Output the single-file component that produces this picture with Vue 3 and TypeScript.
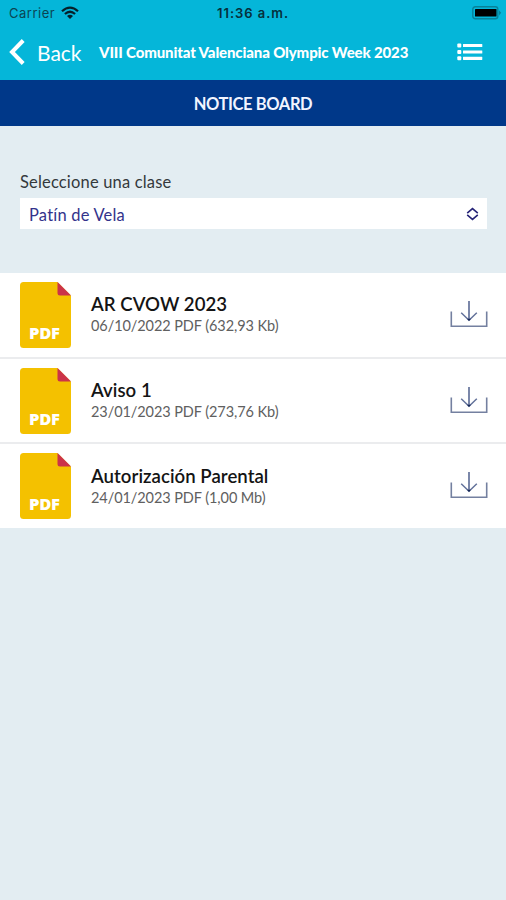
<script setup lang="ts">
interface NoticeDocument {
  title: string
  details: string
}

const documents: NoticeDocument[] = [
  { title: 'AR CVOW 2023', details: '06/10/2022 PDF (632,93 Kb)' },
  { title: 'Aviso 1', details: '23/01/2023 PDF (273,76 Kb)' },
  { title: 'Autorización Parental', details: '24/01/2023 PDF (1,00 Mb)' },
]
</script>

<template>
  <div class="screen">
    <header class="top">
      <div class="status">
        <div class="carrier">
          <span class="carrier-name">Carrier</span>
          <svg class="wifi" width="18" height="14" viewBox="0 0 18 14">
            <path d="M1 5.2Q9-2 17 5.2M3.9 8Q9 3.5 14.1 8" fill="none" stroke="#06202a" stroke-width="2.2" />
            <path d="M6 10Q9 7.6 12 10L9 13Z" fill="#06202a" />
          </svg>
        </div>
        <span class="clock">11:36 a.m.</span>
        <svg class="battery" width="30" height="14" viewBox="0 0 30 14">
          <rect x="0.8" y="0.8" width="25" height="12" rx="2.5" fill="none" stroke="#078299" stroke-width="1.4" />
          <rect x="3" y="3" width="21.5" height="7.6" rx="0.6" fill="#000" />
          <path d="M27 4.2L29.2 6.8 27 9.4Z" fill="#078299" />
        </svg>
      </div>
      <nav class="nav">
        <button class="back">
          <svg width="17" height="26" viewBox="0 0 17 26">
            <path d="M14.2 1.5L3 13 14.2 24.5" fill="none" stroke="#fff" stroke-width="4" />
          </svg>
          <span>Back</span>
        </button>
        <h1 class="event">VIII Comunitat Valenciana Olympic Week 2023</h1>
        <svg class="menu" width="26" height="18" viewBox="0 0 26 18">
          <g fill="#fff">
            <rect x="0.3" y="0.5" width="4" height="4" rx="1" />
            <rect x="0.3" y="7" width="4" height="4" rx="1" />
            <rect x="0.3" y="13.3" width="4" height="4" rx="1" />
            <rect x="6" y="0.9" width="19.3" height="3.2" rx="0.4" />
            <rect x="6" y="7.4" width="19.3" height="3.2" rx="0.4" />
            <rect x="6" y="13.7" width="19.3" height="3.2" rx="0.4" />
          </g>
        </svg>
      </nav>
    </header>

    <h2 class="board">NOTICE BOARD</h2>

    <section class="filter">
      <span class="label">Seleccione una clase</span>
      <button class="select">
        <span class="value">Patín de Vela</span>
        <svg width="13" height="14" viewBox="0 0 13 14">
          <path d="M1.2 6.1L6.5 1.6 11.8 6.1M1.2 7.9L6.5 12.4 11.8 7.9" fill="none" stroke="#252377" stroke-width="1.6" />
        </svg>
      </button>
    </section>

    <ul class="list">
      <li v-for="doc in documents" :key="doc.title" class="row">
        <div class="file">
          <svg width="51" height="66" viewBox="0 0 51 66">
            <path d="M3.5 0H37.5L51 13.5V62.5Q51 66 47.5 66H3.5Q0 66 0 62.5V3.5Q0 0 3.5 0Z" fill="#f4c100" />
            <path d="M37.5 0L51 13.5H40Q37.5 13.5 37.5 11Z" fill="#cb3349" />
            <text x="9" y="57.4" class="file-type">PDF</text>
          </svg>
        </div>
        <div class="info">
          <span class="title">{{ doc.title }}</span>
          <span class="details">{{ doc.details }}</span>
        </div>
        <svg class="download" width="38" height="28" viewBox="0 0 38 28">
          <path d="M1.3 11.5V26.3H36.7V11.5" fill="none" stroke="#7480a0" stroke-width="1.6" />
          <path d="M19 1V20" fill="none" stroke="#64739b" stroke-width="1.7" />
          <path d="M11.2 12.7L19 20.3 26.8 12.7" fill="none" stroke="#64739b" stroke-width="1.5" />
          <path d="M17 18.8H21L19 21Z" fill="#142655" />
        </svg>
      </li>
    </ul>
  </div>
</template>

<style>
body {
  margin: 0;
  background: #e3edf2;
}
</style>

<style scoped>
.screen {
  width: 506px;
  height: 900px;
  overflow: hidden;
  background: #e3edf2;
  font-family: Lato, sans-serif;
  color: #17191b;
}
button {
  border: 0;
  background: none;
  font: inherit;
  color: inherit;
  padding: 0;
}
.top {
  height: 80px;
  background: #05b6d9;
}
.status {
  height: 26px;
  display: grid;
  grid-template-columns: 1fr auto 1fr;
  align-items: center;
  padding: 0 5px 0 9px;
  box-sizing: border-box;
  font-family: Inter, sans-serif;
  font-size: 13px;
  line-height: 26px;
}
.carrier {
  display: flex;
  align-items: center;
  gap: 6px;
  color: #0b4553;
}
.carrier-name {
  letter-spacing: 0.5px;
}
.wifi {
  margin-bottom: 1px;
}
.clock {
  color: #06303c;
  font-weight: 600;
  letter-spacing: 0.95px;
  margin-left: -2px;
  margin-right: 2px;
}
.battery {
  justify-self: end;
  margin-right: -1px;
}
.nav {
  height: 52px;
  display: flex;
  align-items: center;
  padding: 0 23px 0 9px;
  color: #fff;
}
.back {
  display: flex;
  align-items: center;
  gap: 11px;
  width: 90px;
  flex: none;
  font-size: 21px;
}
.event {
  flex: 1;
  margin: 0;
  white-space: nowrap;
  font-size: 15px;
  font-weight: 900;
  letter-spacing: -0.13px;
}
.board {
  margin: 0;
  height: 46px;
  background: #003889;
  color: #f2f5ff;
  text-align: center;
  font-size: 16.5px;
  line-height: 48px;
  font-weight: 700;
  letter-spacing: -0.4px;
}
.filter {
  height: 147px;
  box-sizing: border-box;
  padding: 45px 19px 0 20px;
}
.label {
  display: block;
  height: 27px;
  line-height: 22px;
  font-size: 16.5px;
  letter-spacing: 0.17px;
  color: #34393c;
}
.select {
  width: 100%;
  height: 31px;
  display: flex;
  align-items: center;
  justify-content: space-between;
  padding: 0 8px 0 9px;
  background: #fff;
  color: #33338b;
  font-size: 16.5px;
}
.value {
  padding-top: 2px;
  letter-spacing: 0.2px;
}
.list {
  list-style: none;
  margin: 0;
  padding: 0;
  height: 255px;
  display: flex;
  flex-direction: column;
  background: #fff;
}
.row {
  height: 85.6px;
  flex: none;
  box-sizing: border-box;
  display: flex;
  align-items: flex-start;
  padding: 9px 18px 0 20px;
  border-bottom: 2px solid #ebecee;
}
.row:last-child {
  border-bottom: 0;
  height: 83.8px;
}
.file {
  width: 71px;
  height: 66px;
}
.file-type {
  font-family: "Open Sans", sans-serif;
  font-size: 16.6px;
  font-weight: 800;
  letter-spacing: -0.3px;
  fill: #fff;
}
.info {
  flex: 1;
  display: flex;
  flex-direction: column;
  padding-top: 11.4px;
}
.title {
  font-size: 18.6px;
  line-height: 23px;
  font-weight: 600;
  letter-spacing: 0.04px;
  color: #141414;
}
.details {
  font-size: 14.5px;
  line-height: 19.4px;
  letter-spacing: -0.08px;
  color: #606060;
}
.download {
  margin-top: 18px;
}
</style>
